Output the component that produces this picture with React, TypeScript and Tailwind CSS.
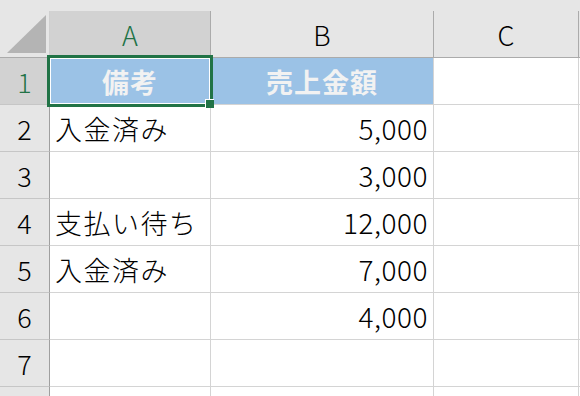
import React from 'react';

type Row = { n: number; a: string; b: string; head?: boolean };

const rows: Row[] = [
  { n: 1, a: '備考', b: '売上金額', head: true },
  { n: 2, a: '入金済み', b: '5,000' },
  { n: 3, a: '', b: '3,000' },
  { n: 4, a: '支払い待ち', b: '12,000' },
  { n: 5, a: '入金済み', b: '7,000' },
  { n: 6, a: '', b: '4,000' },
  { n: 7, a: '', b: '' },
];

const App: React.FC = () => {
  return (
    <div className="relative w-[580px] h-[396px] overflow-hidden bg-white text-black font-['Noto_Sans_CJK_JP',sans-serif] font-light text-[27px] leading-none">
      {/* 上の余白 */}
      <div className="h-[11px] bg-[#e6e6e6]" />

      {/* 列見出し */}
      <div className="flex h-[47px]">
        <div className="w-[50px] shrink-0 bg-[#e6e6e6] border-r border-b border-r-[#cfcfcf] border-b-[#ababab]">
          <svg width="49" height="46" viewBox="0 0 49 46" className="block">
            <polygon points="46,4 46,42 7,42" fill="#b4b4b4" />
          </svg>
        </div>
        <div className="w-[161px] shrink-0 bg-[#d2d2d2] border-r border-b border-r-[#ababab] border-b-[#217346] flex items-center justify-center text-[#217346]">
          A
        </div>
        <div className="w-[223px] shrink-0 bg-[#e6e6e6] border-r border-b border-r-[#ababab] border-b-[#ababab] flex items-center justify-center">
          B
        </div>
        <div className="w-[145px] shrink-0 bg-[#e6e6e6] border-r border-b border-r-[#ababab] border-b-[#ababab] flex items-center justify-center">
          C
        </div>
        <div className="flex-1 bg-[#e6e6e6] border-b border-b-[#ababab]" />
      </div>

      {/* データ行 */}
      {rows.map((r) => (
        <div key={r.n} className="flex h-[47px]">
          <div
            className={
              r.head
                ? 'w-[50px] shrink-0 bg-[#d2d2d2] border-r border-b border-r-[#217346] border-b-[#c6c6c6] flex items-center justify-center text-[#217346]'
                : 'w-[50px] shrink-0 bg-[#e6e6e6] border-r border-b border-r-[#9f9f9f] border-b-[#c6c6c6] flex items-center justify-center'
            }
          >
            {r.n}
          </div>
          <div
            className={
              r.head
                ? 'w-[161px] shrink-0 bg-[#9bc2e6] border-r border-b border-[#d4d4d4] flex items-center justify-center font-bold tracking-[1px] text-[#f2f2f2]'
                : 'w-[161px] shrink-0 border-r border-b border-[#d4d4d4] flex items-center pl-[5px] tracking-[1.5px]'
            }
          >
            {r.a}
          </div>
          <div
            className={
              r.head
                ? 'w-[223px] shrink-0 bg-[#9bc2e6] border-r border-b border-[#d4d4d4] flex items-center justify-center font-bold tracking-[1px] text-[#f2f2f2]'
                : 'w-[223px] shrink-0 border-r border-b border-[#d4d4d4] flex items-center justify-end pr-[5px] text-[28px] tracking-[0.5px]'
            }
          >
            {r.b}
          </div>
          <div className="w-[145px] shrink-0 border-r border-b border-[#d4d4d4]" />
          <div className="flex-1 border-b border-[#d4d4d4]" />
        </div>
      ))}

      {/* 8行目（一部のみ表示） */}
      <div className="flex h-[47px]">
        <div className="w-[50px] shrink-0 bg-[#e6e6e6] border-r border-r-[#9f9f9f]" />
        <div className="w-[161px] shrink-0 border-r border-[#d4d4d4]" />
        <div className="w-[223px] shrink-0 border-r border-[#d4d4d4]" />
        <div className="w-[145px] shrink-0 border-r border-[#d4d4d4]" />
      </div>

      {/* 選択枠 */}
      <div className="absolute left-[47px] top-[55px] w-[166px] h-[52px] border-[3px] border-[#217346]">
        <div className="w-full h-full border border-white" />
      </div>
      <div className="absolute left-[205px] top-[99px] w-[9px] h-[9px] bg-[#217346] border-l border-t border-white" />
    </div>
  );
};

export default App;
